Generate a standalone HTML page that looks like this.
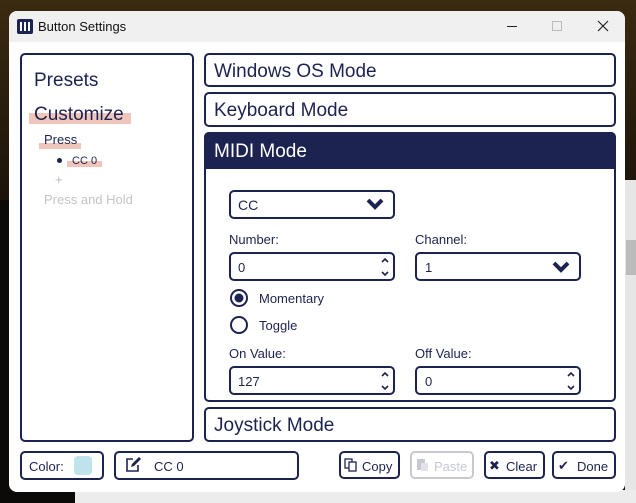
<!DOCTYPE html>
<html><head><style>
*{box-sizing:border-box;margin:0;padding:0}
body{width:636px;height:503px;overflow:hidden;position:relative;font-family:"Liberation Sans","DejaVu Sans",sans-serif;color:#1c2350;background:#0b0a08}
.a{position:absolute}
.b{position:absolute;border:2px solid #1c2350;border-radius:5px;background:#fff}
.t{position:absolute;white-space:nowrap}
.chev{position:absolute}
</style></head><body>
<div class="a" style="left:0;top:0;width:636px;height:200px;background:linear-gradient(180deg,#3a2a10,#1a140a)"></div>
<div class="a" style="left:625px;top:180px;width:11px;height:323px;background:#e6e6e6"></div>
<div class="a" style="left:626px;top:240px;width:10px;height:35px;background:#bbb"></div>
<div class="a" style="left:75px;top:490px;width:561px;height:13px;background:#ececec"></div>
<div class="a" style="left:9px;top:11px;width:616px;height:481px;background:#fff;border-radius:8px;overflow:hidden">
 <div class="a" style="left:0;top:0;width:616px;height:31px;background:#f0f0f0"></div>
</div>
<svg class="a" style="left:17px;top:19px" width="16" height="15"><rect width="16" height="15" rx="2" fill="#1c2350"/><rect x="3" y="3" width="2" height="9" fill="#fff"/><rect x="7" y="3" width="2" height="9" fill="#fff"/><rect x="11" y="3" width="2" height="9" fill="#fff"/></svg>
<div class="t" style="left:38px;top:19px;font-size:13px;color:#111">Button Settings</div>
<div class="a" style="left:507px;top:26px;width:10px;height:1px;background:#222"></div>
<div class="a" style="left:552px;top:21px;width:10px;height:10px;border:1px solid #bbb"></div>
<svg class="a" style="left:597px;top:20px" width="12" height="12"><path d="M1 1 L11 11 M11 1 L1 11" stroke="#222" stroke-width="1.2"/></svg>

<div class="b" style="left:20px;top:53px;width:174px;height:389px"></div>
<div class="t" style="left:34px;top:70px;font-size:19px">Presets</div>
<div class="a" style="left:29px;top:113px;width:102px;height:11px;background:#f0c6bc"></div>
<div class="t" style="left:34px;top:104px;font-size:19px">Customize</div>
<div class="a" style="left:39px;top:143px;width:42px;height:6px;background:#f0c6bc"></div>
<div class="t" style="left:44px;top:132px;font-size:13px">Press</div>
<div class="a" style="left:57px;top:158px;width:5px;height:5px;border-radius:50%;background:#1c2350"></div>
<div class="a" style="left:67px;top:161px;width:35px;height:6px;background:#f0c6bc"></div>
<div class="t" style="left:72px;top:155px;font-size:11px">CC 0</div>
<div class="t" style="left:55px;top:172px;font-size:13px;color:#bbb">+</div>
<div class="t" style="left:44px;top:192px;font-size:13px;color:#c4c4c4">Press and Hold</div>

<div class="b" style="left:204px;top:53px;width:412px;height:34px"></div>
<div class="t" style="left:214px;top:61px;font-size:19px">Windows OS Mode</div>
<div class="b" style="left:204px;top:92px;width:412px;height:35px"></div>
<div class="t" style="left:214px;top:100px;font-size:19px">Keyboard Mode</div>
<div class="b" style="left:204px;top:132px;width:412px;height:270px"></div>
<div class="a" style="left:204px;top:132px;width:412px;height:37px;background:#1c2350;border-radius:5px 5px 0 0"></div>
<div class="t" style="left:214px;top:141px;font-size:19px;color:#fff">MIDI Mode</div>

<div class="b" style="left:229px;top:190px;width:166px;height:29px"></div>
<div class="t" style="left:238px;top:197px;font-size:14px">CC</div>
<svg class="chev" style="left:366px;top:198px" width="18" height="12"><path d="M2 2 L9 9 L16 2" stroke="#1c2350" stroke-width="4" fill="none"/></svg>
<div class="t" style="left:229px;top:232px;font-size:13px">Number:</div>
<div class="t" style="left:415px;top:232px;font-size:13px">Channel:</div>
<div class="b" style="left:229px;top:252px;width:166px;height:29px"></div>
<div class="t" style="left:238px;top:260px;font-size:13px">0</div>
<div class="b" style="left:415px;top:252px;width:166px;height:29px"></div>
<div class="t" style="left:425px;top:260px;font-size:13px">1</div>
<svg class="chev" style="left:552px;top:261px" width="18" height="12"><path d="M2 2 L9 9 L16 2" stroke="#1c2350" stroke-width="4" fill="none"/></svg>
<svg class="a" style="left:380px;top:256px" width="10" height="22"><path d="M2 6 L5 3 L8 6 M2 16 L5 19 L8 16" stroke="#1c2350" stroke-width="1.6" fill="none"/></svg>
<svg class="a" style="left:229px;top:288px" width="20" height="46"><circle cx="10" cy="10" r="8" stroke="#1c2350" stroke-width="2" fill="#fff"/><circle cx="10" cy="10" r="4.5" fill="#1c2350"/><circle cx="10" cy="37" r="8" stroke="#1c2350" stroke-width="2" fill="#fff"/></svg>
<div class="t" style="left:259px;top:291px;font-size:13px">Momentary</div>
<div class="t" style="left:259px;top:318px;font-size:13px">Toggle</div>
<div class="t" style="left:229px;top:346px;font-size:13px">On Value:</div>
<div class="t" style="left:415px;top:346px;font-size:13px">Off Value:</div>
<div class="b" style="left:229px;top:366px;width:166px;height:29px"></div>
<div class="t" style="left:238px;top:374px;font-size:13px">127</div>
<svg class="a" style="left:380px;top:370px" width="10" height="22"><path d="M2 6 L5 3 L8 6 M2 16 L5 19 L8 16" stroke="#1c2350" stroke-width="1.6" fill="none"/></svg>
<div class="b" style="left:415px;top:366px;width:166px;height:29px"></div>
<div class="t" style="left:425px;top:374px;font-size:13px">0</div>
<svg class="a" style="left:566px;top:370px" width="10" height="22"><path d="M2 6 L5 3 L8 6 M2 16 L5 19 L8 16" stroke="#1c2350" stroke-width="1.6" fill="none"/></svg>

<div class="b" style="left:204px;top:407px;width:412px;height:35px"></div>
<div class="t" style="left:214px;top:415px;font-size:19px">Joystick Mode</div>

<div class="b" style="left:20px;top:451px;width:84px;height:29px"></div>
<div class="t" style="left:29px;top:459px;font-size:13px">Color:</div>
<div class="a" style="left:74px;top:456px;width:18px;height:19px;border-radius:4px;background:#bfe3ec"></div>
<div class="b" style="left:114px;top:451px;width:185px;height:29px"></div>
<svg class="a" style="left:124px;top:456px" width="18" height="17"><path d="M9 3 H3 V15 H14 V9" stroke="#1c2350" stroke-width="1.6" fill="none"/><path d="M7 11 L8 8 L15 1 L17 3 L10 10 Z" fill="#1c2350"/></svg>
<div class="t" style="left:154px;top:459px;font-size:13px">CC 0</div>
<div class="b" style="left:339px;top:451px;width:61px;height:28px"></div>
<svg class="a" style="left:344px;top:458px" width="14" height="14"><rect x="1" y="1" width="7" height="9" stroke="#1c2350" fill="none" stroke-width="1.3"/><rect x="5" y="4" width="7" height="9" stroke="#1c2350" fill="#fff" stroke-width="1.3"/></svg>
<div class="t" style="left:362px;top:459px;font-size:13px">Copy</div>
<div class="b" style="left:410px;top:451px;width:64px;height:28px;border-color:#c6c8d4"></div>
<svg class="a" style="left:416px;top:458px" width="14" height="14"><rect x="1" y="1" width="8" height="11" fill="#c6c8d4"/><rect x="5" y="5" width="7" height="8" fill="#e2e3ea"/></svg>
<div class="t" style="left:434px;top:459px;font-size:13px;color:#c6c8d4">Paste</div>
<div class="b" style="left:484px;top:451px;width:61px;height:28px"></div>
<div class="t" style="left:489px;top:458px;font-size:13px;font-weight:bold">✖</div>
<div class="t" style="left:506px;top:459px;font-size:13px">Clear</div>
<div class="b" style="left:552px;top:451px;width:64px;height:28px"></div>
<div class="t" style="left:558px;top:458px;font-size:13px">✔</div>
<div class="t" style="left:577px;top:459px;font-size:13px">Done</div>
</body></html>
